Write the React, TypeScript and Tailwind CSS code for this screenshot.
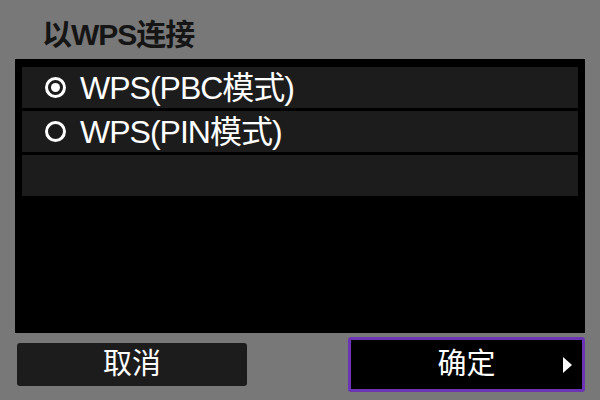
const font = { fontFamily: '"Liberation Sans", "Noto Sans CJK SC", sans-serif' };

function Radio({ checked }: { checked: boolean }) {
  return (
    <span className="flex h-[21px] w-[21px] shrink-0 items-center justify-center rounded-full border-[3px] border-white">
      {checked && <span className="h-[9px] w-[9px] rounded-full bg-white" />}
    </span>
  );
}

export default function App() {
  const options = [
    { label: "WPS(PBC模式)", checked: true },
    { label: "WPS(PIN模式)", checked: false },
    { label: "", checked: false },
  ];
  return (
    <div className="flex h-[400px] w-[600px] flex-col bg-[#787878]" style={font}>
      <div className="h-[59px] pl-[42px] pt-[18px] text-[30px] font-semibold leading-[34px] tracking-[-1px] text-[#151515]">
        以WPS连接
      </div>
      <div className="mx-[15px] flex h-[274px] flex-col gap-[3px] bg-black px-[7px] pt-[8px]">
        {options.map((o, i) => (
          <div key={i} className="flex h-[41px] items-center gap-[14px] bg-[#1c1c1c] pl-[23px] text-[32px] tracking-[-1px] text-white">
            {o.label && (
              <>
                <Radio checked={o.checked} />
                <span className="leading-none">{o.label}</span>
              </>
            )}
          </div>
        ))}
      </div>
      <div className="mt-[4px] flex h-[55px] items-center">
        <div className="ml-[17px] flex h-[43px] w-[230px] items-center justify-center rounded-[3px] bg-[#1c1c1c] text-[29px] text-white">
          取消
        </div>
        <div className="relative ml-[101px] flex h-[55px] w-[237px] items-center justify-center rounded-[3px] border-[3px] border-[#6a34b5] bg-black text-[29px] text-white">
          确定
          <svg className="absolute right-[10px] top-1/2 -translate-y-1/2" width="9" height="16" viewBox="0 0 9 16">
            <path d="M0 0 L9 8 L0 16 Z" fill="white" />
          </svg>
        </div>
      </div>
    </div>
  );
}
